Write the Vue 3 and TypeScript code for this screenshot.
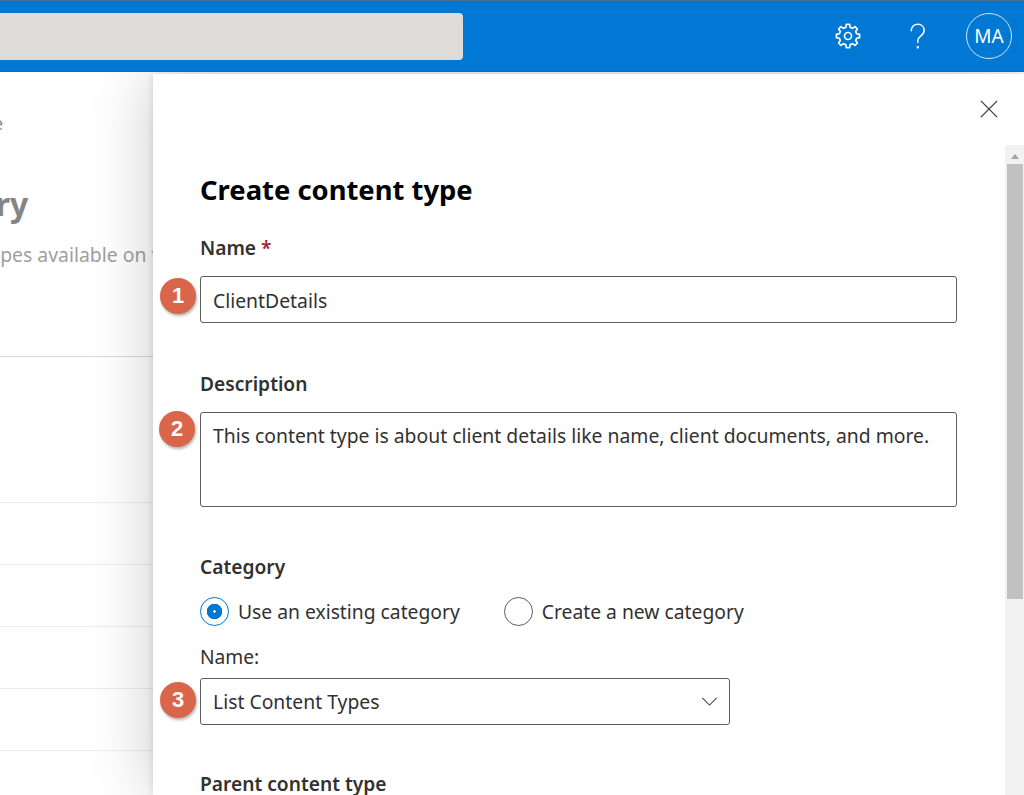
<template>
  <div class="app">
    <header class="topbar">
      <div class="search"></div>
      <div class="actions">
        <svg class="gear" viewBox="0 0 28 28" fill="none" stroke="#fff" stroke-width="1.8" stroke-linejoin="round">
          <path :d="gearPath" />
          <circle cx="14" cy="14" r="3.8" />
        </svg>
        <svg class="help" viewBox="0 0 20 32" fill="none" stroke="#fff" stroke-width="1.7" stroke-linecap="round">
          <path d="M2.5 9.5C2.5 5 5.8 2.5 9.8 2.5c4 0 7 2.6 7 6.5 0 3-1.6 4.6-3.6 6.2-2 1.5-3.4 2.9-3.4 5.6v1.7" />
          <circle cx="9.8" cy="28" r="0.6" />
        </svg>
        <div class="avatar">MA</div>
      </div>
    </header>

    <main class="page">
      <div class="gallery">
        <p class="crumb">Content type</p>
        <h2 class="gallery-title">Content type gallery</h2>
        <p class="gallery-sub">Create and manage content types available on this</p>
        <div class="rows">
          <div v-for="h in rowHeights" :key="h.id" class="row" :style="{ height: h.size + 'px' }"></div>
        </div>
      </div>

      <aside class="panel">
        <button class="close" aria-label="Close">
          <svg viewBox="0 0 20 20" fill="none" stroke="#3b3a39" stroke-width="1.4">
            <path d="M1 1l18 18M19 1L1 19" />
          </svg>
        </button>

        <div class="panel-body">
          <form class="form">
            <h1>Create content type</h1>

            <div class="field name-field">
              <label>Name <span class="req">*</span></label>
              <div class="control">
                <span class="badge">1</span>
                <div class="input">ClientDetails</div>
              </div>
            </div>

            <div class="field desc-field">
              <label>Description</label>
              <div class="control">
                <span class="badge badge-two">2</span>
                <div class="input textarea">This content type is about client details like name, client documents, and more.</div>
              </div>
            </div>

            <div class="field cat-field">
              <label>Category</label>
              <div class="radios">
                <div class="radio-item first">
                  <span class="radio on"></span>
                  <span>Use an existing category</span>
                </div>
                <div class="radio-item">
                  <span class="radio"></span>
                  <span>Create a new category</span>
                </div>
              </div>
              <div class="sub-label">Name:</div>
              <div class="control select-wrap">
                <span class="badge badge-three">3</span>
                <div class="input select">
                  <span>List Content Types</span>
                  <svg viewBox="0 0 18 10" fill="none" stroke="#484644" stroke-width="1.2">
                    <path d="M1 1l8 8 8-8" />
                  </svg>
                </div>
              </div>
            </div>

            <div class="field parent-field">
              <label>Parent content type</label>
            </div>
          </form>

          <div class="scrollbar">
            <div class="arrow"></div>
            <div class="thumb"></div>
          </div>
        </div>
      </aside>
    </main>
  </div>
</template>

<script setup lang="ts">
// row heights of the list that sits behind the panel
const rowHeights = [
  { id: 1, size: 147 },
  { id: 2, size: 62 },
  { id: 3, size: 62 },
  { id: 4, size: 62 },
  { id: 5, size: 62 },
  { id: 6, size: 62 },
];

// gear outline: 8 teeth around the centre of a 28 box
function buildGear(): string {
  const teeth = 8;
  const outer = 12.6;
  const inner = 9.6;
  const pts: string[] = [];
  for (let i = 0; i < teeth; i++) {
    const a = (i / teeth) * Math.PI * 2 - Math.PI / 2;
    const step = (Math.PI * 2) / teeth;
    const offsets: [number, number][] = [
      [inner, -step * 0.32],
      [outer, -step * 0.18],
      [outer, step * 0.18],
      [inner, step * 0.32],
    ];
    for (const [r, o] of offsets) {
      const x = 14 + r * Math.cos(a + o);
      const y = 14 + r * Math.sin(a + o);
      pts.push(`${x.toFixed(2)} ${y.toFixed(2)}`);
    }
  }
  return "M" + pts.join("L") + "Z";
}

const gearPath = buildGear();
</script>

<style>
html,
body {
  margin: 0;
  height: 100%;
  overflow: hidden;
  background: #fff;
}
</style>

<style scoped>
.app {
  height: 795px;
  display: flex;
  flex-direction: column;
  font-family: "Noto Sans", "Open Sans", sans-serif;
  color: #323130;
  overflow: hidden;
}

.topbar {
  flex: none;
  display: flex;
  justify-content: space-between;
  align-items: center;
  background: #0078d4;
  border-top: 1px solid #4a6f8f;
  box-sizing: content-box;
  border-bottom: 1px solid #0a6cc0;
  height: 70px;
}

.search {
  width: 463px;
  height: 47px;
  background: #dddcda;
  border-radius: 0 4px 4px 0;
}

.actions {
  display: flex;
  align-items: center;
  margin-right: 12px;
}

.gear {
  width: 26px;
  height: 26px;
  margin-right: 48px;
}

.help {
  width: 18px;
  height: 29px;
  margin-right: 39px;
}

.avatar {
  width: 46px;
  height: 46px;
  box-sizing: border-box;
  border: 1px solid #d5e6f6;
  border-radius: 50%;
  color: #fff;
  font-size: 19px;
  display: flex;
  align-items: center;
  justify-content: center;
}

.page {
  position: relative;
  flex: 1;
  min-height: 0;
  overflow: hidden;
}

.gallery {
  width: 153px;
  height: 100%;
  overflow: hidden;
  white-space: nowrap;
  background: #fff;
}

.crumb {
  margin: 39px 0 0 -106px;
  font-size: 18px;
  line-height: 24px;
  color: #8a8886;
}

.gallery-title {
  margin: 47px 0 0 -299px;
  font-size: 32px;
  line-height: 44px;
  font-weight: 700;
  color: #858585;
}

.gallery-sub {
  margin: 16px 0 0 -276px;
  font-size: 19.4px;
  line-height: 26px;
  color: #a19f9d;
}

.rows {
  margin-top: 88px;
}

.row {
  box-sizing: border-box;
  border-bottom: 1px solid #ececec;
}

.row:first-child {
  border-top: 1px solid #d9d9d9;
}

.panel {
  position: absolute;
  left: 153px;
  right: 0;
  top: 2px;
  bottom: 0;
  background: #fff;
  box-shadow: -2px 0 60px rgba(0, 0, 0, 0.2), -1px 0 6px rgba(0, 0, 0, 0.1);
  display: flex;
  flex-direction: column;
}

.close {
  position: absolute;
  top: 26px;
  right: 26px;
  width: 18px;
  height: 18px;
  padding: 0;
  border: 0;
  background: none;
}

.close svg {
  display: block;
  width: 18px;
  height: 18px;
}

.panel-body {
  flex: 1;
  display: flex;
  justify-content: space-between;
  padding-top: 71px;
  min-height: 0;
}

.form {
  width: 757px;
  margin-left: 47px;
}

h1 {
  margin: 27px 0 0;
  font-size: 27.4px;
  line-height: 36px;
  font-weight: 700;
  color: #000;
}

label,
.sub-label {
  display: block;
  font-size: 19.2px;
  line-height: 26px;
}

label {
  font-weight: 600;
}

.req {
  color: #a4262c;
}

.field {
  margin: 0;
}

.name-field {
  margin-top: 27px;
}

.desc-field {
  margin-top: 48px;
}

.cat-field {
  margin-top: 47px;
}

.parent-field {
  margin-top: 46px;
}

.control {
  position: relative;
  margin-top: 15px;
}

.badge {
  position: absolute;
  left: -40px;
  top: 2px;
  width: 36px;
  height: 36px;
  border-radius: 50%;
  background: #d9654a;
  box-shadow: 1px 2px 3px rgba(0, 0, 0, 0.3);
  color: #fff;
  font-family: "Liberation Sans", sans-serif;
  font-size: 22px;
  font-weight: 700;
  display: flex;
  align-items: center;
  justify-content: center;
}

.badge-two {
  left: -41px;
  top: -1px;
}

.badge-three {
  top: 4px;
}

.input {
  box-sizing: border-box;
  height: 47px;
  padding: 0 12px;
  border: 1px solid #605e5c;
  border-radius: 3px;
  background: #fff;
  font-size: 19.35px;
  line-height: 48px;
  white-space: nowrap;
}

.textarea {
  height: 95px;
  line-height: 26px;
  padding-top: 10px;
}

.radios {
  display: flex;
  margin-top: 17px;
}

.radio-item {
  display: flex;
  align-items: center;
  gap: 9px;
  font-size: 19.3px;
  line-height: 29px;
}

.radio-item.first {
  margin-right: 44px;
}

.radio {
  flex: none;
  width: 29px;
  height: 29px;
  box-sizing: border-box;
  border: 1px solid #605e5c;
  border-radius: 50%;
}

.radio.on {
  border: 1.5px solid #0078d4;
  background: radial-gradient(circle, #fff 0 1px, #0078d4 1.5px 7.5px, #fff 8px);
}

.sub-label {
  margin-top: 18px;
  font-weight: 400;
}

.select-wrap {
  margin-top: 8px;
  width: 530px;
}

.select {
  height: 47px;
  line-height: 47px;
  display: flex;
  align-items: center;
  justify-content: space-between;
  padding-right: 11px;
}

.select svg {
  width: 17px;
  height: 9px;
}

.scrollbar {
  width: 19px;
  flex: none;
  background: #f1f1f1;
  display: flex;
  flex-direction: column;
  align-items: center;
}

.arrow {
  margin: 9px 0 5px;
  width: 0;
  height: 0;
  border-left: 4px solid transparent;
  border-right: 4px solid transparent;
  border-bottom: 5px solid #a3a3a3;
}

.thumb {
  width: 16px;
  height: 435px;
  background: #c1c1c1;
}
</style>
